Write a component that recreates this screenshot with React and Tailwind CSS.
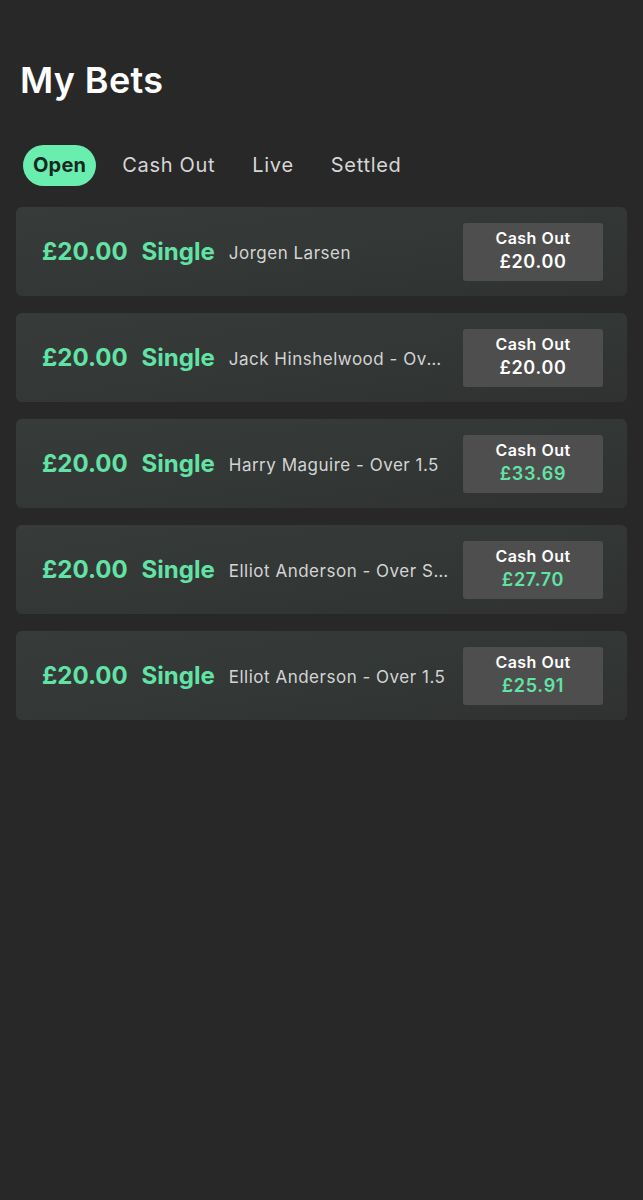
const bets = [
  { stake: "£20.00", type: "Single", name: "Jorgen Larsen", cashOut: "£20.00", up: false },
  { stake: "£20.00", type: "Single", name: "Jack Hinshelwood - Over 1.5 Shots", cashOut: "£20.00", up: false },
  { stake: "£20.00", type: "Single", name: "Harry Maguire - Over 1.5", cashOut: "£33.69", up: true },
  { stake: "£20.00", type: "Single", name: "Elliot Anderson - Over Shots on Target", cashOut: "£27.70", up: true },
  { stake: "£20.00", type: "Single", name: "Elliot Anderson - Over 1.5", cashOut: "£25.91", up: true },
];

export default function App() {
  return (
    <main
      className="min-h-[1200px] w-full bg-[#282828] text-white"
      style={{ fontFamily: "Inter, 'Noto Sans', sans-serif" }}
    >
      {/* Header */}
      <h1 className="px-5 pt-[56px] text-[36px] font-semibold leading-[48px] tracking-[0.01em]">My Bets</h1>

      {/* Tabs */}
      <div className="mt-[41px] flex items-center pl-[23px] text-[20px] tracking-[0.035em]">
        <span className="rounded-full bg-[#6aeeb0] px-[10px] py-[8px] font-bold leading-[25px] tracking-[0.01em] text-[#17281f]">
          Open
        </span>
        <span className="ml-[26px] leading-[25px] text-[#d6d6d6]">Cash Out</span>
        <span className="ml-[37px] leading-[25px] text-[#d6d6d6]">Live</span>
        <span className="ml-[37px] leading-[25px] text-[#d6d6d6]">Settled</span>
      </div>

      {/* Bets */}
      <div className="mt-[21px] flex flex-col gap-[17px] px-4">
        {bets.map((b, i) => (
          <div
            key={i}
            className="flex h-[89px] items-center rounded-md bg-gradient-to-br from-[#373c3a] to-[#2f3231] pl-[26px] pr-[24px]"
          >
            <span className="text-[24px] font-bold text-[#62e3a6]">{b.stake}</span>
            <span className="ml-[14px] text-[24px] font-bold text-[#62e3a6]">{b.type}</span>
            <div className="ml-[14px] mt-[4px] min-w-0 flex-1 pr-2">
              <p className="max-w-[220px] truncate text-[17px] tracking-[0.03em] text-[#d4d4d4]">{b.name}</p>
            </div>
            <div className="flex h-[58px] w-[140px] shrink-0 flex-col items-center justify-center rounded-[3px] bg-[#4e4e4e]">
              <span className="-mt-[2px] text-[16px] font-semibold leading-[20px] tracking-[0.03em] text-white">Cash Out</span>
              <span
                className={`mt-[3px] text-[18px] font-semibold leading-[22px] tracking-[0.04em] ${
                  b.up ? "text-[#62e3a6]" : "text-white"
                }`}
              >
                {b.cashOut}
              </span>
            </div>
          </div>
        ))}
      </div>
    </main>
  );
}
